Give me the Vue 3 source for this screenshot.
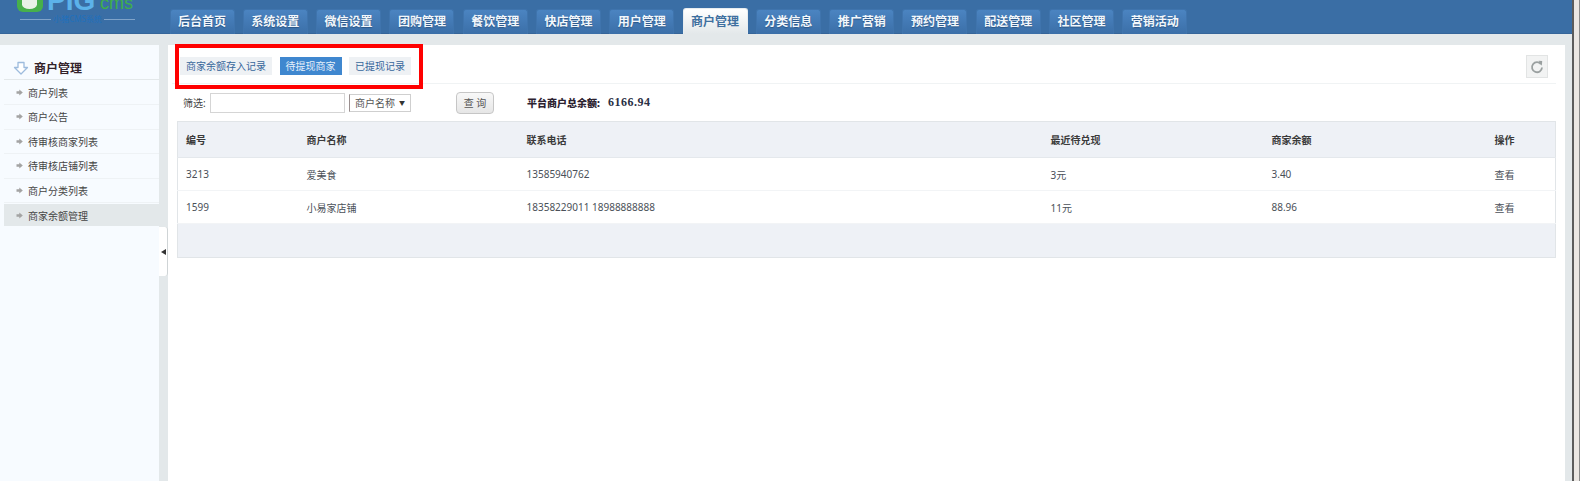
<script setup>
const navItems = ['后台首页','系统设置','微信设置','团购管理','餐饮管理','快店管理','用户管理','商户管理','分类信息','推广营销','预约管理','配送管理','社区管理','营销活动']
const sideItems = ['商户列表','商户公告','待审核商家列表','待审核店铺列表','商户分类列表','商家余额管理']
const subTabs = [
  { label: '商家余额存入记录', active: false },
  { label: '待提现商家', active: true },
  { label: '已提现记录', active: false }
]
const columns = ['编号','商户名称','联系电话','最近待兑现','商家余额','操作']
const rows = [
  ['3213','爱美食','13585940762','3元','3.40','查看'],
  ['1599','小易家店铺','18358229011 18988888888','11元','88.96','查看']
]
</script>

<template>
  <div class="shell">
    <div class="page">
      <header class="header">
        <div class="logo">
          <div class="logo-top">
            <span class="logo-mark"><i></i></span>
            <span class="logo-pig">PIG</span>
            <span class="logo-cms">cms</span>
          </div>
          <div class="logo-sub"><b></b><span>小猪CMS系统</span><b></b></div>
        </div>
        <nav class="nav">
          <a v-for="n in navItems" :key="n" class="nav-tab" :class="{ on: n === '商户管理' }">{{ n }}</a>
        </nav>
      </header>

      <div class="body">
        <aside class="side">
          <div class="side-title">
            <svg width="16" height="14" viewBox="0 0 16 14">
              <path d="M5 1.5h6v5h3.5L8 13 1.5 6.500H5z" fill="#fff" stroke="#9dbbdd" stroke-width="1.300" stroke-linejoin="round"/>
            </svg>
            <span>商户管理</span>
          </div>
          <ul class="side-list">
            <li v-for="s in sideItems" :key="s" :class="{ on: s === '商家余额管理' }">
              <svg width="7" height="7" viewBox="0 0 7 7"><path d="M0.500 2.300h2.800V0.500L6.800 3.500 3.300 6.500V4.700H0.500z" fill="#a3a3a3"/></svg>
              <span>{{ s }}</span>
            </li>
          </ul>
        </aside>

        <div class="gutter">
          <div class="handle"><span></span></div>
        </div>

        <main class="main">
          <div class="annot"></div>
          <div class="topbar">
            <div class="subtabs">
              <a v-for="t in subTabs" :key="t.label" class="subtab" :class="{ on: t.active }">{{ t.label }}</a>
            </div>
            <button class="refresh" type="button" aria-label="刷新">
              <svg width="14" height="14" viewBox="0 0 14 14">
                <path d="M11 4.200A5 5 0 1 0 12 7.500" fill="none" stroke="#9aa0a0" stroke-width="1.800"/>
                <path d="M8.600 0.800l3.600 0.300-0.300 4.600z" fill="#9aa0a0"/>
              </svg>
            </button>
          </div>

          <div class="filter">
            <label class="filter-label">筛选:</label>
            <input class="filter-input" type="text" />
            <div class="filter-select"><span>商户名称</span><em>▼</em></div>
            <button class="filter-btn" type="button">查 询</button>
            <div class="total"><b>平台商户总余额:</b><span>6166.94</span></div>
          </div>

          <table class="grid">
            <colgroup>
              <col style="width:121px" /><col style="width:220px" /><col style="width:524px" />
              <col style="width:221px" /><col style="width:223px" /><col />
            </colgroup>
            <thead>
              <tr><th v-for="c in columns" :key="c">{{ c }}</th></tr>
            </thead>
            <tbody>
              <tr v-for="r in rows" :key="r[0]">
                <td v-for="(v, i) in r" :key="i">{{ v }}</td>
              </tr>
            </tbody>
            <tfoot>
              <tr><td colspan="6"></td></tr>
            </tfoot>
          </table>
        </main>
      </div>
    </div>
    <div class="edge"></div>
  </div>
</template>

<style>
html, body { margin: 0; padding: 0; background: #fff; overflow: hidden; }
</style>

<style scoped>
.shell {
  display: flex;
  width: 1580px;
  height: 481px;
  overflow: hidden;
  font-family: "Noto Sans", "Noto Sans CJK SC", sans-serif;
  font-size: 10px;
  color: #444;
}
.page {
  width: 1572px;
  display: flex;
  flex-direction: column;
  background: #e3e8ea;
}
.edge {
  flex: 1;
  background: #ebe7e3;
  border-left: 2px solid #5c5c5c;
  border-right: 1px solid #8a8a8a;
}

/* header */
.header {
  height: 34px;
  flex: none;
  display: flex;
  background: #3a6ea5;
  border-bottom: 1px solid #35659a;
  box-sizing: border-box;
}
.logo {
  width: 169.500px;
  flex: none;
  box-sizing: border-box;
  padding-left: 17px;
  overflow: hidden;
}
.logo-top {
  height: 12px;
  display: flex;
  align-items: flex-end;
  overflow: hidden;
}
.logo-mark {
  width: 26px;
  height: 26px;
  flex: none;
  border-radius: 6px;
  background: #47b04b;
  display: block;
  overflow: hidden;
}
.logo-mark i {
  display: block;
  width: 15px;
  height: 9px;
  margin: 14px 0 0 5px;
  border-radius: 0 0 50% 50%;
  background: #e8f2e8;
}
.logo-pig {
  margin: 0 0 4px 4px;
  font: 700 28px/14px "Liberation Sans", sans-serif;
  color: #5cb2ea;
  width: 48px;
  height: 14px;
  flex: none;
}
.logo-cms {
  font: 400 18px/10px "Liberation Sans", sans-serif;
  color: #3fae4a;
  margin: 0 0 4px 5px;
}
.logo-sub {
  display: flex;
  align-items: center;
  gap: 2px;
  width: 115px;
  margin: 2px 0 0 3px;
  height: 10px;
}
.logo-sub b {
  flex: 1;
  height: 1px;
  background: #7fa3c9;
}
.logo-sub span {
  font-size: 8px;
  line-height: 10px;
  color: #1f70bd;
}
.nav {
  display: flex;
  gap: 8.300px;
  padding-top: 9px;
}
.nav-tab {
  width: 65px;
  height: 25px;
  box-sizing: border-box;
  text-align: center;
  font-size: 12px;
  font-weight: 700;
  line-height: 24px;
  color: #f2f7fc;
  text-shadow: 0 1px 1px #2a5484;
  background: linear-gradient(#4b84c1, #3b6fa8);
  border: 1px solid #3f74ad;
  border-bottom: 0;
  border-radius: 3px 3px 0 0;
}
.nav-tab.on {
  height: 26px;
  margin-top: -1px;
  line-height: 26px;
  color: #3e6f9f;
  text-shadow: none;
  background: linear-gradient(#fff, #e3e8ea);
  border-color: #e8edf0;
}

/* body */
.body {
  flex: 1;
  min-height: 0;
  display: flex;
  padding-top: 11px;
}
.side {
  width: 159px;
  flex: none;
  background: #f7fbff;
}
.side-title {
  height: 35px;
  box-sizing: border-box;
  margin-left: 4px;
  padding: 12px 0 0 9px;
  display: flex;
  align-items: center;
  gap: 5px;
  border-bottom: 1px solid #e3e8ea;
  font-size: 12px;
  font-weight: 700;
  color: #33222a;
}
.side-list {
  list-style: none;
  margin: 0;
  padding: 0.500px 0 0;
}
.side-list li {
  height: 24.500px;
  box-sizing: border-box;
  margin-left: 4px;
  padding-left: 12px;
  display: flex;
  align-items: center;
  gap: 5px;
  border-bottom: 1px solid #eef2f5;
  color: #444;
}
.side-list li.on {
  margin-right: -9px;
  height: 22px;
  margin-top: 1px;
  background: #e3e8ea;
  border-bottom: 0;
}
.gutter {
  width: 9px;
  flex: none;
  position: relative;
}
.handle {
  position: absolute;
  left: 0;
  top: 182px;
  width: 9px;
  height: 49px;
  box-sizing: border-box;
  background: #fff;
  border-right: 1px solid #cfd4d6;
  border-radius: 0 3px 3px 0;
  display: flex;
  align-items: center;
  justify-content: center;
}
.handle span {
  width: 0;
  height: 0;
  border: 3px solid transparent;
  border-right: 5px solid #333;
  border-left: 0;
}
.main {
  flex: 1;
  min-width: 0;
  margin-right: 7px;
  background: #fff;
  position: relative;
}
.annot {
  position: absolute;
  left: 7px;
  top: -1px;
  width: 248px;
  height: 45px;
  box-sizing: border-box;
  border: 4px solid #f00;
  pointer-events: none;
}
.topbar {
  height: 39px;
  box-sizing: border-box;
  margin: 0 9px 0 4px;
  padding: 10px 8px 0 8px;
  display: flex;
  align-items: flex-start;
  justify-content: space-between;
  border-bottom: 1px solid #f0f3f4;
}
.subtabs {
  display: flex;
  gap: 7.500px;
  padding-top: 2px;
}
.subtab {
  height: 18px;
  line-height: 18px;
  padding: 0 6px;
  background: #eef1f4;
  color: #36669b;
}
.subtab.on {
  background: #3f87cf;
  color: #e6f0fa;
}
.refresh {
  width: 22px;
  height: 23px;
  padding: 0;
  display: flex;
  align-items: center;
  justify-content: center;
  background: #f2f3f3;
  border: 1px solid #e2e4e4;
}
.filter {
  height: 37px;
  display: flex;
  align-items: center;
  padding-left: 15px;
  color: #444;
}
.filter-label {
  width: 27px;
  flex: none;
}
.filter-input {
  width: 135px;
  height: 20px;
  box-sizing: border-box;
  padding: 0;
  margin: 0;
  background: #fff;
  border: 1px solid #d5d5d5;
}
.filter-select {
  width: 62px;
  height: 18px;
  box-sizing: border-box;
  margin-left: 4px;
  display: flex;
  align-items: center;
  justify-content: space-between;
  padding: 0 5px 0 5px;
  border: 1px solid #cfcfcf;
  border-left-color: #9a8f8f;
  color: #555;
}
.filter-select em {
  font-style: normal;
  font-size: 6px;
  color: #333;
}
.filter-btn {
  width: 38px;
  height: 22px;
  margin: 0 0 0 45px;
  padding: 0;
  font: 10px "Noto Sans", "Noto Sans CJK SC", sans-serif;
  color: #555;
  background: linear-gradient(#f8f8f8, #e6e6e6);
  border: 1px solid #c6c6c6;
  border-radius: 4px;
}
.total {
  margin-left: 33px;
  display: flex;
  align-items: center;
  font-weight: 700;
  color: #2c2230;
}
.total b {
  width: 81px;
  flex: none;
}
.total span {
  font-family: "Liberation Serif", serif;
  font-size: 12px;
  letter-spacing: 0.500px;
  color: #2a3044;
}
.grid {
  width: 1379px;
  margin-left: 9px;
  table-layout: fixed;
  border-collapse: collapse;
  border: 1px solid #e1e5e8;
}
.grid th,
.grid td {
  padding: 0 0 0 8px;
  text-align: left;
  font-size: 10px;
}
.grid th {
  height: 35px;
  background: #eef1f6;
  border-bottom: 1px solid #e4e8ec;
  font-weight: 700;
  color: #3a3a3a;
}
.grid tbody td {
  height: 32px;
  border-bottom: 1px solid #f2f4f6;
  color: #4a5058;
}
.grid tfoot td {
  height: 33px;
  background: #eef1f6;
}
</style>
